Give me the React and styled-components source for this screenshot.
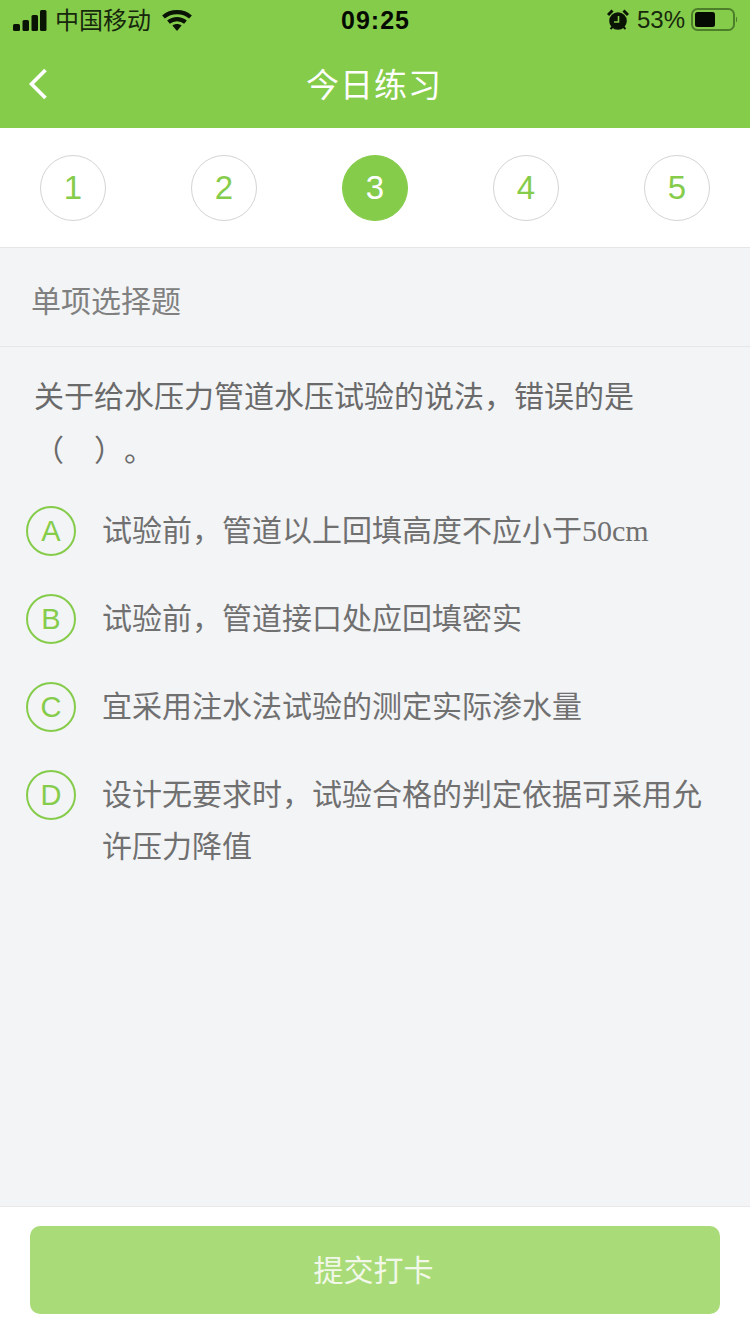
import styled, { createGlobalStyle } from "styled-components";

const Global = createGlobalStyle`
  html, body { margin: 0; padding: 0; background: #f3f4f6; }
  * { box-sizing: border-box; }
`;

const cjk = `"Liberation Sans", "Noto Sans CJK SC", sans-serif`;
const green = "#86cc4b";

const Page = styled.div`
  width: 750px;
  height: 1334px;
  display: flex;
  flex-direction: column;
  background: #f3f4f6;
  font-family: ${cjk};
  overflow: hidden;
`;

const Header = styled.header`
  height: 128px;
  background: ${green};
  display: flex;
  flex-direction: column;
`;

const StatusBar = styled.div`
  height: 40px;
  padding: 0 12px 0 13px;
  display: grid;
  grid-template-columns: 1fr auto 1fr;
  align-items: center;
  color: #0a1405;
`;

const StatusLeft = styled.div`
  display: flex;
  align-items: center;
  gap: 8px;
  font-size: 24px;
`;

const Carrier = styled.span`
  color: #16280c;
  margin-top: -3px;
`;

const Clock = styled.div`
  font-size: 25px;
  font-weight: 700;
  letter-spacing: 1px;
  color: #050a02;
  font-family: "Liberation Sans", sans-serif;
`;

const StatusRight = styled.div`
  display: flex;
  align-items: center;
  justify-content: flex-end;
  gap: 6px;
  font-size: 24px;
  color: #16280c;
`;

const NavBar = styled.div`
  flex: 1;
  position: relative;
  display: flex;
  align-items: center;
  justify-content: center;
`;

const BackButton = styled.button`
  position: absolute;
  left: 28px;
  top: 28px;
  padding: 0;
  border: 0;
  background: none;
  display: flex;
`;

const Title = styled.h1`
  margin: 0 2px 2px 0;
  font-size: 33px;
  font-weight: 400;
  color: #fff;
  letter-spacing: 1px;
`;

const Steps = styled.nav`
  height: 120px;
  background: #fff;
  border-bottom: 1px solid #e6e6e6;
  padding: 0 40px;
  display: flex;
  align-items: center;
  justify-content: space-between;
`;

const Step = styled.div`
  width: 66px;
  height: 66px;
  border-radius: 50%;
  border: 1px solid ${(p) => (p.$active ? green : "#d4d4d4")};
  background: ${(p) => (p.$active ? green : "#fff")};
  color: ${(p) => (p.$active ? "#fff" : green)};
  font-size: 33px;
  display: flex;
  align-items: center;
  justify-content: center;
`;

const SectionLabel = styled.div`
  height: 99px;
  padding: 4px 31px 0;
  border-bottom: 1px solid #e6e7e9;
  display: flex;
  align-items: center;
  font-size: 30px;
  color: #808080;
`;

const Content = styled.main`
  flex: 1;
  display: flex;
  flex-direction: column;
  padding: 23px 26px 0;
`;

const Question = styled.p`
  margin: 0 0 27px 8px;
  font-size: 30px;
  line-height: 54px;
  color: #6a6a6a;
`;

const QuestionEnd = styled.span`
  margin-left: 15px;
`;

const Options = styled.div`
  display: flex;
  flex-direction: column;
  gap: 36px;
`;

const Option = styled.div`
  display: flex;
  gap: 26px;
`;

const Badge = styled.div`
  flex: none;
  width: 50px;
  height: 50px;
  margin-top: 1px;
  border-radius: 50%;
  border: 2px solid ${green};
  color: ${green};
  font-size: 29px;
  display: flex;
  align-items: center;
  justify-content: center;
`;

const OptionText = styled.div`
  font-size: 30px;
  line-height: 52px;
  color: #707070;
  padding-right: 20px;
`;

const Latin = styled.span`
  font-family: "Liberation Serif", serif;
`;

const Footer = styled.footer`
  height: 128px;
  background: #fff;
  border-top: 1px solid #e8e8e8;
  padding: 19px 30px 0;
`;

const Submit = styled.button`
  width: 690px;
  height: 88px;
  padding: 0 3px 4px 0;
  border: 0;
  border-radius: 10px;
  background: #a9dc78;
  color: #f2f8e9;
  font-family: ${cjk};
  font-size: 30px;
`;

const Signal = () => (
  <svg width="34" height="21" viewBox="0 0 34 21" fill="#0a1405">
    <rect x="0" y="14" width="7" height="7" rx="1.5" />
    <rect x="9.5" y="10" width="6.5" height="11" rx="1.5" />
    <rect x="18.5" y="5" width="6.5" height="16" rx="1.5" />
    <rect x="27" y="0" width="6.5" height="21" rx="1.5" />
  </svg>
);

const Wifi = () => (
  <svg width="30" height="22" viewBox="0 0 30 22" fill="none" stroke="#0a1405" strokeWidth="4.2" style={{ marginLeft: 3 }}>
    <path d="M1.5 8C9 1.5 21 1.5 28.5 8" />
    <path d="M6.5 13.2C11.5 9 18.5 9 23.5 13.2" />
    <path d="M10.4 16.6 15 22 19.6 16.6C17 14.6 13 14.6 10.4 16.6Z" fill="#0a1405" stroke="none" />
  </svg>
);

const Alarm = () => (
  <svg width="22" height="22" viewBox="0 0 22 22" style={{ marginRight: 2 }}>
    <circle cx="11" cy="12" r="8.8" fill="#0a1405" />
    <path d="M1 6 5.5 1.5 M16.5 1.5 21 6" stroke="#0a1405" strokeWidth="3" />
    <path d="M3.5 20 5.5 18 M18.5 20 16.5 18" stroke="#0a1405" strokeWidth="2" />
    <path d="M11.5 7V13H7" fill="none" stroke={green} strokeWidth="1.6" />
  </svg>
);

const Battery = () => (
  <svg width="47" height="24" viewBox="0 0 47 24">
    <rect x="1" y="1" width="42" height="21" rx="5.5" fill="none" stroke="#4d7f2a" strokeWidth="2" />
    <rect x="4" y="4" width="20" height="15" rx="2.5" fill="#050a02" />
    <path d="M45 8.5C46.5 9.5 46.5 13.5 45 14.5Z" fill="#4d7f2a" />
  </svg>
);

const Chevron = () => (
  <svg width="20" height="32" viewBox="0 0 20 32" fill="none" stroke="#fff" strokeWidth="3.6">
    <path d="M17.5 2 3.5 16 17.5 30" />
  </svg>
);

const options = [
  { key: "A", text: <>试验前，管道以上回填高度不应小于<Latin>50cm</Latin></> },
  { key: "B", text: "试验前，管道接口处应回填密实" },
  { key: "C", text: "宜采用注水法试验的测定实际渗水量" },
  { key: "D", text: "设计无要求时，试验合格的判定依据可采用允许压力降值" },
];

export default function App() {
  return (
    <Page>
      <Global />
      <Header>
        <StatusBar>
          <StatusLeft>
            <Signal />
            <Carrier>中国移动</Carrier>
            <Wifi />
          </StatusLeft>
          <Clock>09:25</Clock>
          <StatusRight>
            <Alarm />
            <span>53%</span>
            <Battery />
          </StatusRight>
        </StatusBar>
        <NavBar>
          <BackButton><Chevron /></BackButton>
          <Title>今日练习</Title>
        </NavBar>
      </Header>
      <Steps>
        {[1, 2, 3, 4, 5].map((n) => (
          <Step key={n} $active={n === 3}>{n}</Step>
        ))}
      </Steps>
      <SectionLabel>单项选择题</SectionLabel>
      <Content>
        <Question>关于给水压力管道水压试验的说法，错误的是（　）<QuestionEnd>。</QuestionEnd></Question>
        <Options>
          {options.map((o) => (
            <Option key={o.key}>
              <Badge>{o.key}</Badge>
              <OptionText>{o.text}</OptionText>
            </Option>
          ))}
        </Options>
      </Content>
      <Footer>
        <Submit>提交打卡</Submit>
      </Footer>
    </Page>
  );
}
